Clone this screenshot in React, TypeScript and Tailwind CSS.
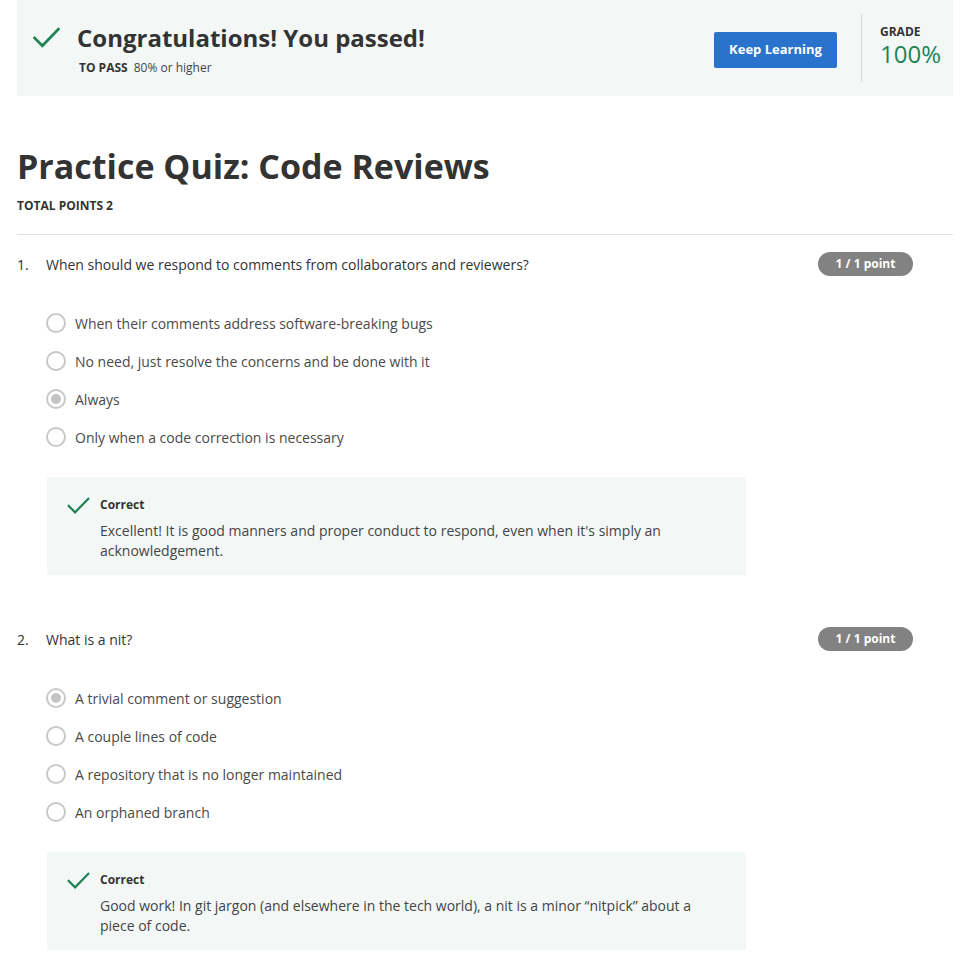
import React from "react";

const Check = ({ className }: { className?: string }) => (
  <svg viewBox="0 0 26 20" className={className} fill="none">
    <path d="M1.5 10.5 L9 18 L24.5 2" stroke="#1f8354" strokeWidth="2.6" strokeLinecap="square" />
  </svg>
);

const Radio = ({ checked }: { checked?: boolean }) => (
  <div className="w-[20px] h-[20px] rounded-full border-2 border-[#c8c8c8] bg-white flex items-center justify-center shrink-0">
    {checked && <div className="w-[10px] h-[10px] rounded-full bg-[#c4c4c4]" />}
  </div>
);

type Q = {
  n: number;
  text: string;
  options: string[];
  selected: number;
  feedback: string;
};

const questions: Q[] = [
  {
    n: 1,
    text: "When should we respond to comments from collaborators and reviewers?",
    options: [
      "When their comments address software-breaking bugs",
      "No need, just resolve the concerns and be done with it",
      "Always",
      "Only when a code correction is necessary",
    ],
    selected: 2,
    feedback:
      "Excellent! It is good manners and proper conduct to respond, even when it's simply an acknowledgement.",
  },
  {
    n: 2,
    text: "What is a nit?",
    options: [
      "A trivial comment or suggestion",
      "A couple lines of code",
      "A repository that is no longer maintained",
      "An orphaned branch",
    ],
    selected: 0,
    feedback:
      "Good work! In git jargon (and elsewhere in the tech world), a nit is a minor \u201cnitpick\u201d about a piece of code.",
  },
];

function Question({ q }: { q: Q }) {
  return (
    <div>
      <div className="flex items-center h-[24px]">
        <div className="w-[29px] text-[14px] text-[#333]">{q.n}.</div>
        <div className="flex-1 text-[14px] text-[#333]">{q.text}</div>
        <div className="mr-[41px] w-[95px] h-[24px] rounded-full bg-[#828282] text-white text-[12px] font-bold flex items-center justify-center">
          1 / 1 point
        </div>
      </div>
      <div className="pl-[29px] pt-[28px] flex flex-col">
        {q.options.map((o, i) => (
          <div key={i} className="flex items-center h-[38px] gap-[9px]">
            <Radio checked={i === q.selected} />
            <span className="text-[14px] text-[#4a4a4a]">{o}</span>
          </div>
        ))}
      </div>
      <div className="ml-[30px] mt-[21px] w-[699px] h-[98px] bg-[#f3f8f7] pl-[20px] pt-[19px] flex gap-[10px]">
        <Check className="w-[23px] h-[17px] mt-[1px] shrink-0" />
        <div>
          <div className="text-[12px] font-bold text-[#333] leading-[17px]">Correct</div>
          <div className="mt-[8px] text-[14px] leading-[20px] text-[#444] pr-[40px]">
            {q.feedback}
          </div>
        </div>
      </div>
    </div>
  );
}

export default function App() {
  return (
    <div className="bg-white min-h-[961px] w-[971px]" style={{ fontFamily: '"Open Sans", sans-serif' }}>
      <div className="px-[17px]">
        <div className="w-[936px] h-[96px] bg-[#f3f8f7] flex items-center">
          <Check className="ml-[16px] w-[27px] h-[21px] mt-[-21px] shrink-0" />
          <div className="ml-[17px] flex-1 mt-[2px]">
            <div className="text-[24px] font-bold text-[#333] leading-[32px]">Congratulations! You passed!</div>
            <div className="mt-[6px] ml-[2px] text-[12px] text-[#444] leading-[16px]">
              <span className="font-bold text-[#333]">TO PASS</span>
              <span className="ml-[6px]">80% or higher</span>
            </div>
          </div>
          <button className="mt-[4px] w-[123px] h-[36px] rounded-[2px] bg-[#2a73cc] text-white text-[13px] font-bold">
            Keep Learning
          </button>
          <div className="ml-[24px] w-px h-[68px] bg-[#dadada]" />
          <div className="ml-[18px] w-[73px] mt-[-4px]">
            <div className="text-[12px] font-bold text-[#333] leading-[16px]">GRADE</div>
            <div className="text-[24px] text-[#1f8354] leading-[28px]">100%</div>
          </div>
        </div>

        <h1 className="mt-[48px] text-[34px] font-bold text-[#333] leading-[44px]">Practice Quiz: Code Reviews</h1>
        <div className="mt-[10px] text-[12px] font-bold text-[#333] leading-[16px]">TOTAL POINTS 2</div>
        <div className="mt-[20px] w-[936px] h-px bg-[#e1e1e1]" />

        <div className="pt-[17px]">
          <Question q={questions[0]} />
          <div className="h-[52px]" />
          <Question q={questions[1]} />
        </div>
      </div>
    </div>
  );
}
